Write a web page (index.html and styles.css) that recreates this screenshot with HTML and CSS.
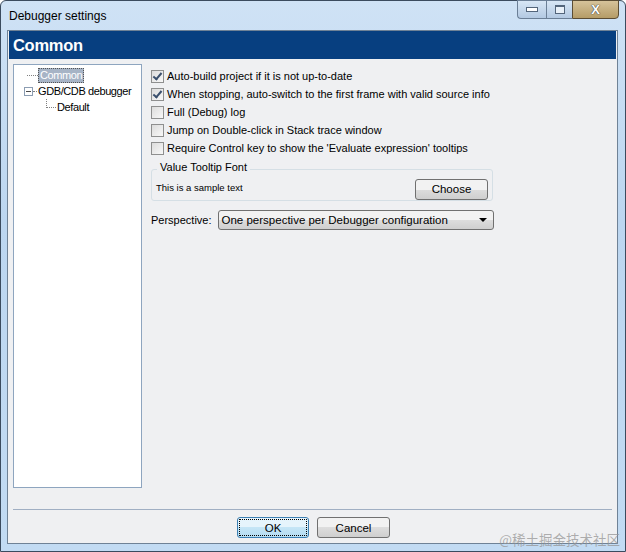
FILE: index.html
```html
<!DOCTYPE html>
<html>
<head>
<meta charset="utf-8">
<link rel="stylesheet" href="styles.css">
</head>
<body>
<div class="window">
  <div class="titlebar">
    <span class="title">Debugger settings</span>
    <div class="caption">
      <div class="cbtn min"><span class="glyph-min"></span></div>
      <div class="cbtn max"><span class="glyph-max"></span></div>
      <div class="cbtn close"><span class="glyph-x">X</span></div>
    </div>
  </div>
  <div class="client">
    <div class="header">Common</div>
    <div class="main">
      <div class="tree">
        <div class="node n0"><span class="hline"></span><span class="sel">Common</span></div>
        <div class="node n1"><span class="expander"></span><span class="hline short"></span><span class="label">GDB/CDB debugger</span></div>
        <div class="node n2"><span class="lline"></span><span class="label">Default</span></div>
      </div>
      <div class="panel">
        <div class="check"><span class="box on"></span><span>Auto-build project if it is not up-to-date</span></div>
        <div class="check"><span class="box on"></span><span>When stopping, auto-switch to the first frame with valid source info</span></div>
        <div class="check"><span class="box"></span><span>Full (Debug) log</span></div>
        <div class="check"><span class="box"></span><span>Jump on Double-click in Stack trace window</span></div>
        <div class="check"><span class="box"></span><span>Require Control key to show the 'Evaluate expression' tooltips</span></div>
        <div class="group">
          <span class="legend">Value Tooltip Font</span>
          <span class="sample">This is a sample text</span>
          <button class="btn choose">Choose</button>
        </div>
        <div class="persp">
          <span class="plabel">Perspective:</span>
          <div class="combo"><span>One perspective per Debugger configuration</span><span class="arrow"></span></div>
        </div>
      </div>
    </div>
    <div class="sep"></div>
    <div class="buttons">
      <button class="btn ok">OK</button>
      <button class="btn cancel">Cancel</button>
    </div>
  </div>
  <div class="watermark">@稀土掘金技术社区</div>
</div>
</body>
</html>
```
FILE: styles.css
```css
html, body { margin: 0; padding: 0; }
body { width: 626px; height: 552px; overflow: hidden; background: #fff; font-family: "Liberation Sans", Arial, sans-serif; font-size: 11px; color: #000; }
.window {
  position: relative;
  width: 626px; height: 552px; box-sizing: border-box;
  background: linear-gradient(#cfe2f5, #bcd6f0 40%, #c2dbf3);
  border: 1px solid #3b4b5e;
  border-radius: 6px 6px 0 0;
  display: flex; flex-direction: column;
}
.titlebar { height: 29px; display: flex; align-items: flex-start; justify-content: space-between; }
.title { margin: 8px 0 0 8px; font-size: 12px; color: #000; }
.caption { display: flex; margin-right: 6px; margin-top: -1px; }
.cbtn { height: 19px; box-sizing: border-box; border: 1px solid #6b7f96; display: flex; align-items: center; justify-content: center; background: linear-gradient(#d7e6f5, #b3c9e2); }
.cbtn.min { width: 29px; border-radius: 0 0 0 4px; border-right: none; }
.cbtn.max { width: 26px; border-right: none; }
.cbtn.close { width: 47px; border-radius: 0 0 4px 0; background: linear-gradient(#d6c39a, #b59c67); border-color: #5b4d34; }
.glyph-min { width: 10px; height: 3px; background: #fff; border: 1px solid #53657b; }
.glyph-max { width: 8px; height: 6px; border: 1px solid #53657b; border-top-width: 2px; background: #e8f0f8; }
.glyph-x { color: #fff; font-weight: bold; font-size: 13px; text-shadow: 0 0 1px #333, 0 0 1px #333; }
.client {
  margin: 0 7px 7px 6px; flex: 1;
  border: 1px solid #6f8296;
  background: #eff0f2;
  display: flex; flex-direction: column;
}
.header { height: 28px; margin: 0 1px; background: #073f80; color: #fff; font-weight: bold; font-size: 16.5px; line-height: 28px; padding-left: 4px; letter-spacing: -0.3px; }
.main { flex: 1; display: flex; padding: 5px 0 0 5px; }
.tree { width: 127px; height: 422px; border: 1px solid #8ea5bf; background: #fff; position: relative; white-space: nowrap; letter-spacing: -0.4px; }
.node { height: 16px; display: flex; align-items: center; position: relative; }
.n0 { margin-top: 2px; padding-left: 13px; }
.n1 { padding-left: 10px; }
.n2 { padding-left: 32px; }
.hline { width: 11px; border-top: 1px dotted #808080; }
.hline.short { width: 4px; }
.sel { background: #a7b4c6; color: #fff; outline: 1px dotted #555; outline-offset: -1px; padding: 0 2px; line-height: 15px; }
.label { padding-left: 1px; }
.expander { width: 7px; height: 7px; border: 1px solid #8c9db2; position: relative; background: #fff; }
.expander::after { content: ""; position: absolute; left: 1px; right: 1px; top: 3px; border-top: 1px solid #4a4a4a; }
.lline { width: 9px; height: 8px; border-left: 1px dotted #808080; border-bottom: 1px dotted #808080; margin-top: -8px; margin-right: 0; }
.panel { margin-left: 9px; display: flex; flex-direction: column; white-space: nowrap; }
.check { height: 18px; display: flex; align-items: center; gap: 3px; }
.check:first-child { margin-top: 3px; }
.box { width: 13px; height: 13px; box-sizing: border-box; border: 1px solid #8e8f8f; background: linear-gradient(135deg, #dcdcdc, #f8f8f8); position: relative; }
.box.on::after { content: ""; position: absolute; left: 3px; top: 0px; width: 3px; height: 7px; border-right: 2px solid #3a4f6d; border-bottom: 2px solid #3a4f6d; transform: rotate(40deg); }
.group { position: relative; margin-top: 12px; width: 342px; height: 32px; box-sizing: border-box; border: 1px solid #d5dfe5; border-radius: 3px; display: flex; align-items: center; justify-content: space-between; padding: 2px 4px 0 4px; }
.legend { position: absolute; left: 5px; top: -9px; background: #eff0f2; padding: 0 3px; }
.sample { font-size: 9.5px; margin-top: 2px; }
.btn { font-family: "Liberation Sans", Arial, sans-serif; font-size: 11.5px; color: #000; height: 21px; border: 1px solid #707070; border-radius: 3px; background: linear-gradient(#f2f2f2 50%, #dddddd 50%, #cfcfcf); padding: 0; }
.choose { width: 73px; margin-top: 6px; }
.persp { display: flex; align-items: center; margin-top: 9px; gap: 6px; }
.combo { width: 276px; height: 20px; box-sizing: border-box; border: 1px solid #707070; border-radius: 3px; background: linear-gradient(#f2f2f2 50%, #dddddd 50%, #cfcfcf); display: flex; align-items: center; justify-content: space-between; padding: 0 6px 0 3px; font-size: 11.5px; }
.arrow { width: 0; height: 0; border-left: 4px solid transparent; border-right: 4px solid transparent; border-top: 4px solid #000; }
.sep { margin: 0 5px 0 5px; border-top: 1px solid #a0afc3; height: 0; }
.buttons { display: flex; justify-content: center; gap: 8px; padding: 7px 0 5px 0; margin-left: 2px; }
.ok { width: 72px; background: linear-gradient(#e5f4fc 50%, #c4e5f6 50%, #b4dcf2); border-color: #3c7fb1; outline: 1px dotted #000; outline-offset: -3px; }
.cancel { width: 73px; }
.watermark { position: absolute; right: 5px; bottom: 2px; font-family: "Noto Sans CJK SC", sans-serif; font-size: 13.5px; color: rgba(150,150,150,0.75); }
```
